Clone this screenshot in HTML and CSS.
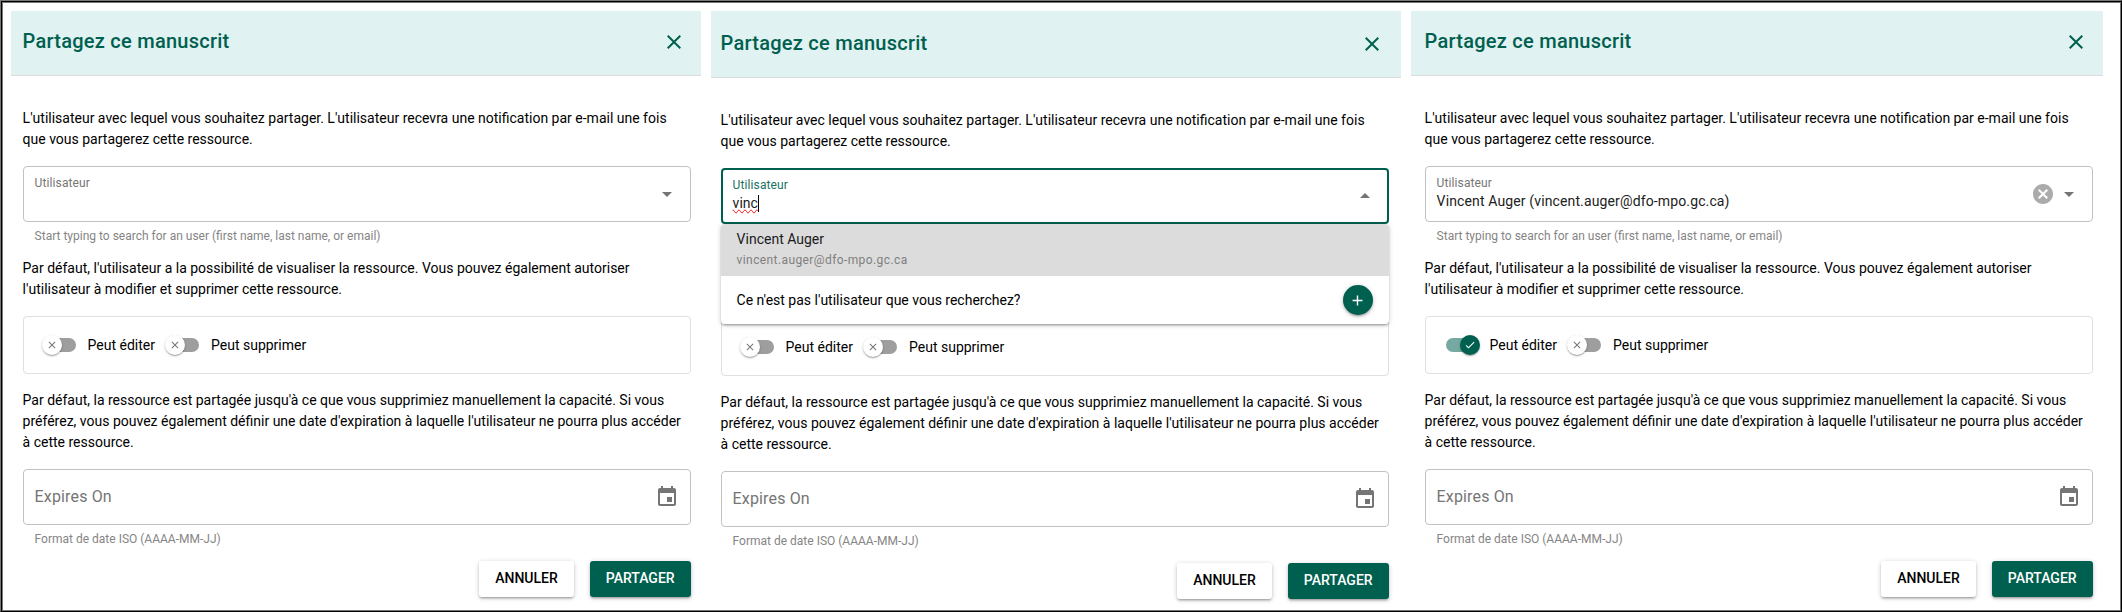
FILE: index.html
```html
<!DOCTYPE html>
<html lang="fr">
<head>
<meta charset="utf-8">
<title>Partagez ce manuscrit</title>
<link rel="stylesheet" href="styles.css">
</head>
<body>
<svg class="defs" aria-hidden="true">
  <symbol id="close" viewBox="0 0 24 24"><path d="M19 6.41L17.59 5 12 10.59 6.41 5 5 6.41 10.59 12 5 17.59 6.41 19 12 13.41 17.59 19 19 17.59 13.41 12z"/></symbol>
  <symbol id="down" viewBox="0 0 24 24"><path d="M7 10l5 5 5-5z"/></symbol>
  <symbol id="up" viewBox="0 0 24 24"><path d="M7 14l5-5 5 5z"/></symbol>
  <symbol id="event" viewBox="0 0 24 24"><path d="M17 12h-5v5h5v-5zM16 1v2H8V1H6v2H5c-1.11 0-1.99.9-1.99 2L3 19c0 1.1.89 2 2 2h14c1.1 0 2-.9 2-2V5c0-1.100-.9-2-2-2h-1V1h-2zm3 18H5V8h14v11z"/></symbol>
  <symbol id="cancel" viewBox="0 0 24 24"><path d="M12 2C6.470 2 2 6.470 2 12s4.470 10 10 10 10-4.470 10-10S17.530 2 12 2zm5 13.590L15.590 17 12 13.410 8.410 17 7 15.590 10.590 12 7 8.410 8.410 7 12 10.590 15.590 7 17 8.410 13.410 12 17 15.590z"/></symbol>
  <symbol id="check" viewBox="0 0 24 24"><path d="M9 16.170L4.830 12l-1.420 1.410L9 19 21 7l-1.410-1.410z"/></symbol>
  <symbol id="plus" viewBox="0 0 24 24"><path d="M19 13h-6v6h-2v-6H5v-2h6V5h2v6h6v2z"/></symbol>
</svg>
<main class="frame">
  <section class="dialog first">
    <header class="bar"><h1 class="title">Partagez ce manuscrit</h1><svg class="icon"><use href="#close"/></svg></header>
    <div class="body">
      <p class="text">L'utilisateur avec lequel vous souhaitez partager. L'utilisateur recevra une notification par e-mail une fois que vous partagerez cette ressource.</p>
      <div class="field">
        <div class="control"><span class="label">Utilisateur</span></div>
        <svg class="icon"><use href="#down"/></svg>
      </div>
      <div class="hint">Start typing to search for an user (first name, last name, or email)</div>
      <p class="text">Par défaut, l'utilisateur a la possibilité de visualiser la ressource. Vous pouvez également autoriser l'utilisateur à modifier et supprimer cette ressource.</p>
      <div class="card">
        <div class="toggle"><span class="switch"><span class="thumb"><svg><use href="#close"/></svg></span></span><span>Peut éditer</span></div>
        <div class="toggle"><span class="switch"><span class="thumb"><svg><use href="#close"/></svg></span></span><span>Peut supprimer</span></div>
      </div>
      <p class="text">Par défaut, la ressource est partagée jusqu'à ce que vous supprimiez manuellement la capacité. Si vous préférez, vous pouvez également définir une date d'expiration à laquelle l'utilisateur ne pourra plus accéder à cette ressource.</p>
      <div class="field"><span class="placeholder">Expires On</span><svg class="icon"><use href="#event"/></svg></div>
      <div class="hint">Format de date ISO (AAAA-MM-JJ)</div>
      <div class="actions"><button class="btn">Annuler</button><button class="btn primary">Partager</button></div>
    </div>
  </section>

  <section class="dialog second">
    <header class="bar"><h1 class="title">Partagez ce manuscrit</h1><svg class="icon"><use href="#close"/></svg></header>
    <div class="body">
      <p class="text">L'utilisateur avec lequel vous souhaitez partager. L'utilisateur recevra une notification par e-mail une fois que vous partagerez cette ressource.</p>
      <div class="field focused">
        <div class="control"><span class="label">Utilisateur</span><span class="value"><span class="misspelt">vinc</span><span class="caret"></span></span></div>
        <svg class="icon"><use href="#up"/></svg>
      </div>
      <div class="menu">
        <div class="option"><span class="name">Vincent Auger</span><span class="mail">vincent.auger@dfo-mpo.gc.ca</span></div>
        <div class="missing"><span>Ce n'est pas l'utilisateur que vous recherchez?</span><span class="add"><svg><use href="#plus"/></svg></span></div>
      </div>
      <div class="card">
        <div class="toggle"><span class="switch"><span class="thumb"><svg><use href="#close"/></svg></span></span><span>Peut éditer</span></div>
        <div class="toggle"><span class="switch"><span class="thumb"><svg><use href="#close"/></svg></span></span><span>Peut supprimer</span></div>
      </div>
      <p class="text">Par défaut, la ressource est partagée jusqu'à ce que vous supprimiez manuellement la capacité. Si vous préférez, vous pouvez également définir une date d'expiration à laquelle l'utilisateur ne pourra plus accéder à cette ressource.</p>
      <div class="field"><span class="placeholder">Expires On</span><svg class="icon"><use href="#event"/></svg></div>
      <div class="hint">Format de date ISO (AAAA-MM-JJ)</div>
      <div class="actions"><button class="btn">Annuler</button><button class="btn primary">Partager</button></div>
    </div>
  </section>

  <section class="dialog third">
    <header class="bar"><h1 class="title">Partagez ce manuscrit</h1><svg class="icon"><use href="#close"/></svg></header>
    <div class="body">
      <p class="text">L'utilisateur avec lequel vous souhaitez partager. L'utilisateur recevra une notification par e-mail une fois que vous partagerez cette ressource.</p>
      <div class="field">
        <div class="control"><span class="label">Utilisateur</span><span class="value">Vincent Auger (vincent.auger@dfo-mpo.gc.ca)</span></div>
        <svg class="icon clear"><use href="#cancel"/></svg>
        <svg class="icon"><use href="#down"/></svg>
      </div>
      <div class="hint">Start typing to search for an user (first name, last name, or email)</div>
      <p class="text">Par défaut, l'utilisateur a la possibilité de visualiser la ressource. Vous pouvez également autoriser l'utilisateur à modifier et supprimer cette ressource.</p>
      <div class="card">
        <div class="toggle"><span class="switch on"><span class="thumb"><svg><use href="#check"/></svg></span></span><span>Peut éditer</span></div>
        <div class="toggle"><span class="switch"><span class="thumb"><svg><use href="#close"/></svg></span></span><span>Peut supprimer</span></div>
      </div>
      <p class="text">Par défaut, la ressource est partagée jusqu'à ce que vous supprimiez manuellement la capacité. Si vous préférez, vous pouvez également définir une date d'expiration à laquelle l'utilisateur ne pourra plus accéder à cette ressource.</p>
      <div class="field"><span class="placeholder">Expires On</span><svg class="icon"><use href="#event"/></svg></div>
      <div class="hint">Format de date ISO (AAAA-MM-JJ)</div>
      <div class="actions"><button class="btn">Annuler</button><button class="btn primary">Partager</button></div>
    </div>
  </section>
</main>
</body>
</html>
```
FILE: styles.css
```css
* { box-sizing: border-box; }
body {
  margin: 0;
  background: #fff;
  color: #000;
  font: 14px/21px Roboto, sans-serif;
}
svg { display: block; fill: currentColor; flex: none; }
.defs { position: absolute; width: 0; height: 0; }

.frame {
  display: flex;
  gap: 10px;
  width: 2122px;
  height: 612px;
  padding: 10px;
  border: 1px solid;
  border-color: #777 #000 #000 #777;
  box-shadow: inset 1px 1px 0 #000, inset 2px 2px 0 #777, inset -1px -1px 0 #777;
  overflow: hidden;
}
.dialog { width: 690px; flex: none; }
.third { width: 692px; }
.bar {
  display: flex;
  align-items: center;
  justify-content: space-between;
  height: 65px;
  padding: 0 15.4px 2px 11.6px;
  background: #e0f2f1;
  border-bottom: 1px solid #dcdcdc;
  color: #00604f;
}
.second .bar { height: 67px; padding: 0 17.4px 0 9.6px; }
.third .bar { padding-left: 13.6px; }
.title {
  margin: 0;
  padding-bottom: 1px;
  font-size: 20px;
  font-weight: 500;
  line-height: 31px;
  letter-spacing: 0.0125em;
}
.icon { width: 24px; height: 24px; }

.body { padding: 32px 10.4px 0 11.6px; }
.second .body { padding: 32px 12.4px 0 9.6px; }
.third .body { padding-left: 13.6px; }
.text { margin: 0 0 16px; }

.field {
  display: flex;
  align-items: center;
  height: 56px;
  padding: 0 11px;
  border: 1px solid #c2c2c2;
  border-radius: 4px;
  color: #757575;
}
.field.focused { border: 2px solid #00604f; padding: 0 10px; }
.control {
  flex: 1;
  align-self: stretch;
  display: flex;
  flex-direction: column;
  padding-top: 7px;
}
.focused .control { padding-top: 6px; }
.label { font-size: 12px; line-height: 18px; letter-spacing: 0.00937em; color: #757575; }
.focused .label { color: #1a7061; }
.value { display: flex; align-items: center; line-height: 18px; color: #212121; letter-spacing: 0.00937em; }
.misspelt { text-decoration-line: spelling-error; }
.caret { width: 1px; height: 17px; background: #000; }
.focused .value { letter-spacing: 0; }
.placeholder { flex: 1; padding-bottom: 2px; font-size: 16px; letter-spacing: 0.00937em; }
.clear { opacity: 0.6; margin-right: 2px; }
.hint {
  padding: 8px 12px 0;
  margin-bottom: 16px;
  font-size: 12px;
  line-height: 12px;
  color: #858585;
}

.card {
  display: flex;
  height: 58px;
  margin-bottom: 16px;
  padding: 8px;
  border: 1px solid #e0e0e0;
  border-radius: 4px;
}
.toggle { display: flex; align-items: center; height: 40px; }
.switch { width: 56px; height: 40px; padding: 13px 12px; }
.switch::before {
  content: "";
  display: block;
  width: 32px;
  height: 14px;
  border-radius: 7px;
  background: #9e9e9e;
}
.thumb {
  position: relative;
  display: grid;
  place-items: center;
  width: 20px;
  height: 20px;
  margin: -17px 0 0 -2px;
  border-radius: 50%;
  background: #fff;
  color: #757575;
  box-shadow: 0 1px 3px rgba(0, 0, 0, 0.2), 0 1px 1px rgba(0, 0, 0, 0.14), 0 2px 1px -1px rgba(0, 0, 0, 0.12);
}
.thumb svg { width: 12px; height: 12px; }
.on::before { background: #75a9a1; }
.on .thumb { margin-left: 14px; background: #00604f; color: #fff; }

.menu {
  position: relative;
  height: 100px;
  margin-bottom: -6px;
  border-radius: 4px;
  background: #fff;
  overflow: visible;
  box-shadow: 0 1px 5px rgba(0, 0, 0, 0.2), 0 2px 2px rgba(0, 0, 0, 0.14), 0 3px 1px -2px rgba(0, 0, 0, 0.12);
}
.option {
  display: flex;
  flex-direction: column;
  height: 52px;
  padding: 5px 16px 0;
  border-radius: 4px 4px 0 0;
  background: #dcdcdc;
  color: #1b1b1b;
}
.name { line-height: 20px; }
.mail { font-size: 12px; line-height: 23px; letter-spacing: 0.03333em; color: #7f7f7f; }
.missing { display: flex; align-items: center; justify-content: space-between; height: 48px; padding: 0 16px; }
.add {
  display: grid;
  place-items: center;
  width: 30px;
  height: 30px;
  border-radius: 50%;
  background: #00604f;
  color: #fff;
  box-shadow: 0 1px 5px rgba(0, 0, 0, 0.2), 0 2px 2px rgba(0, 0, 0, 0.14), 0 3px 1px -2px rgba(0, 0, 0, 0.12);
}
.add svg { width: 17px; height: 17px; }

.actions { display: flex; justify-content: flex-end; gap: 16px; }
.btn {
  height: 36px;
  padding: 0 16px 2px;
  border: 0;
  border-radius: 3px;
  background: #fff;
  color: #000;
  font: 500 14px/24px Roboto, sans-serif;
  text-transform: uppercase;
  box-shadow: 0 1px 5px rgba(0, 0, 0, 0.2), 0 2px 2px rgba(0, 0, 0, 0.14), 0 3px 1px -2px rgba(0, 0, 0, 0.12);
}
.primary { background: #00604f; color: #fff; }
```
